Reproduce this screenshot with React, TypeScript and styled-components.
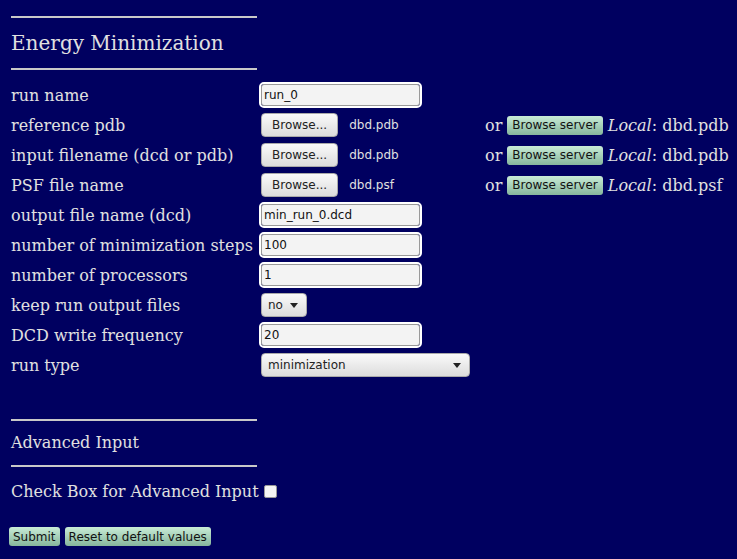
import React from 'react'
import styled, { createGlobalStyle } from 'styled-components'

const Global = createGlobalStyle`
    html, body { margin: 0; background: #000060; }
    body { font-family: 'DejaVu Serif', serif; color: #e0e0e0; }
`

const Page = styled.div`
    padding: 16px 0 0 11px;
    min-height: 543px;
`

const Rule = styled.div`
    width: 246px;
    height: 2px;
    background: #c8c8c8;
`

const Title = styled.h2`
    margin: 0;
    font-size: 20px;
    font-weight: normal;
    line-height: 50px;
`

const SubTitle = styled.div`
    font-size: 16px;
    line-height: 44px;
`

const Form = styled.div`
    display: grid;
    grid-template-columns: 250px 224px auto;
    grid-auto-rows: 30px;
    margin-top: 10px;
    align-items: center;
`

const Label = styled.div`
    font-size: 16px;
`

const Cell = styled.div`
    display: flex;
    align-items: center;
    gap: 11px;
`

const Text = styled.input`
    width: 153px;
    height: 20px;
    box-sizing: content-box;
    padding: 0 2px;
    border: 1px solid #999;
    border-radius: 3px;
    outline: 2px solid #fff;
    outline-offset: 0;
    background: #f3f3f3;
    font: 12px 'DejaVu Sans', sans-serif;
    color: #111;
`

const Button = styled.button`
    height: 24px;
    padding: 0 10px;
    border: 1px solid #aaa;
    border-radius: 4px;
    background: linear-gradient(#fafafa, #dcdcdc);
    font: 12px 'DejaVu Sans', sans-serif;
    color: #222;
`

const FileName = styled.span`
    font: 12px 'DejaVu Sans', sans-serif;
`

const Green = styled.button`
    height: 19px;
    padding: 0 5px;
    border: none;
    border-radius: 3px;
    background: linear-gradient(#c9ecd7, #86b59c);
    font: 12px 'DejaVu Sans', sans-serif;
    color: #111;
`

const Server = styled.div`
    display: flex;
    align-items: center;
    gap: 5px;
    font-size: 16px;
    i { font-style: italic; }
`

const Select = styled.div<{ $w: number }>`
    width: ${p => p.$w}px;
    height: 24px;
    box-sizing: border-box;
    padding: 0 8px 0 6px;
    display: flex;
    align-items: center;
    justify-content: space-between;
    border: 1px solid #aaa;
    border-radius: 4px;
    background: linear-gradient(#fafafa, #dcdcdc);
    font: 12px 'DejaVu Sans', sans-serif;
    color: #222;
    &::after {
        content: '';
        border: 4px solid transparent;
        border-top: 5px solid #222;
        border-bottom: none;
    }
`

const CheckRow = styled.div`
    display: flex;
    align-items: center;
    gap: 5px;
    font-size: 16px;
    height: 48px;
`

const Box = styled.span`
    width: 11px;
    height: 11px;
    border: 1px solid #999;
    border-radius: 2px;
    background: #f5f5f5;
`

const Actions = styled.div`
    display: flex;
    gap: 5px;
    margin: 12px 0 0 -2px;
`

const Action = styled(Green)`
    height: 19px;
    padding: 0 4px;
`

const files = [
    ['reference pdb', 'dbd.pdb'],
    ['input filename (dcd or pdb)', 'dbd.pdb'],
    ['PSF file name', 'dbd.psf'],
]

const texts = [
    ['output file name (dcd)', 'min_run_0.dcd'],
    ['number of minimization steps', '100'],
    ['number of processors', '1'],
]

export default function App() {
    return (
        <Page>
            <Global />
            <Rule />
            <Title>Energy Minimization</Title>
            <Rule />
            <Form>
                <Label>run name</Label>
                <Cell><Text defaultValue="run_0" /></Cell>
                <div />
                {files.map(([l, f]) => (
                    <React.Fragment key={l}>
                        <Label>{l}</Label>
                        <Cell><Button>Browse...</Button><FileName>{f}</FileName></Cell>
                        <Server>or <Green>Browse server</Green><span><i>Local</i>: {f}</span></Server>
                    </React.Fragment>
                ))}
                {texts.map(([l, v]) => (
                    <React.Fragment key={l}>
                        <Label>{l}</Label>
                        <Cell><Text defaultValue={v} /></Cell>
                        <div />
                    </React.Fragment>
                ))}
                <Label>keep run output files</Label>
                <Cell><Select $w={46}>no</Select></Cell>
                <div />
                <Label>DCD write frequency</Label>
                <Cell><Text defaultValue="20" /></Cell>
                <div />
                <Label>run type</Label>
                <Cell><Select $w={209}>minimization</Select></Cell>
                <div />
            </Form>
            <div style={{ height: 39 }} />
            <Rule />
            <SubTitle>Advanced Input</SubTitle>
            <Rule />
            <CheckRow>Check Box for Advanced Input <Box /></CheckRow>
            <Actions>
                <Action>Submit</Action>
                <Action>Reset to default values</Action>
            </Actions>
        </Page>
    )
}
